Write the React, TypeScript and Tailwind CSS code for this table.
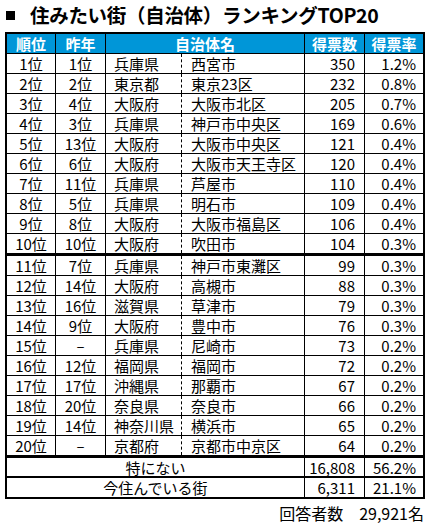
import React from "react";

type Row = [string, string, string, string, string, string];

const rows: Row[] = [
  ["1位", "1位", "兵庫県", "西宮市", "350", "1.2%"],
  ["2位", "2位", "東京都", "東京23区", "232", "0.8%"],
  ["3位", "4位", "大阪府", "大阪市北区", "205", "0.7%"],
  ["4位", "3位", "兵庫県", "神戸市中央区", "169", "0.6%"],
  ["5位", "13位", "大阪府", "大阪市中央区", "121", "0.4%"],
  ["6位", "6位", "大阪府", "大阪市天王寺区", "120", "0.4%"],
  ["7位", "11位", "兵庫県", "芦屋市", "110", "0.4%"],
  ["8位", "5位", "兵庫県", "明石市", "109", "0.4%"],
  ["9位", "8位", "大阪府", "大阪市福島区", "106", "0.4%"],
  ["10位", "10位", "大阪府", "吹田市", "104", "0.3%"],
  ["11位", "7位", "兵庫県", "神戸市東灘区", "99", "0.3%"],
  ["12位", "14位", "大阪府", "高槻市", "88", "0.3%"],
  ["13位", "16位", "滋賀県", "草津市", "79", "0.3%"],
  ["14位", "9位", "大阪府", "豊中市", "76", "0.3%"],
  ["15位", "–", "兵庫県", "尼崎市", "73", "0.2%"],
  ["16位", "12位", "福岡県", "福岡市", "72", "0.2%"],
  ["17位", "17位", "沖縄県", "那覇市", "67", "0.2%"],
  ["18位", "20位", "奈良県", "奈良市", "66", "0.2%"],
  ["19位", "14位", "神奈川県", "横浜市", "65", "0.2%"],
  ["20位", "–", "京都府", "京都市中京区", "64", "0.2%"],
];

const font = { fontFamily: '"Noto Sans CJK JP", "Noto Sans", sans-serif' };

export default function App() {
  return (
    <div className="w-[434px] h-[527px] bg-white text-black" style={font}>
      <div className="flex items-center h-[30px] pl-[6px]">
        <div className="w-[9px] h-[9px] bg-black" />
        <div className="ml-[15px] text-[19.5px] font-bold leading-none tracking-[-0.3px]">
          住みたい街（自治体）ランキングTOP20
        </div>
      </div>
      <div className="ml-[5px] mt-[2px] w-[420px] border-2 border-black text-[15px] leading-none">
        <div className="flex h-[20px] bg-[#0096d8] text-white font-bold border-b border-black">
          <div className="w-[49px] flex items-center justify-center border-r border-black">順位</div>
          <div className="w-[50px] flex items-center justify-center border-r border-black">昨年</div>
          <div className="w-[199px] flex items-center justify-center border-r border-black">自治体名</div>
          <div className="w-[60px] flex items-center justify-center border-r border-black">得票数</div>
          <div className="flex-1 flex items-center justify-center">得票率</div>
        </div>
        {rows.map((r, i) => {
          const thick = i === 9 || i === 19;
          return (
            <div
              key={i}
              className={
                thick
                  ? "flex h-[22px] border-b-[3px] border-black"
                  : "flex h-[20px] border-b border-black"
              }
            >
              <div className="w-[49px] flex items-center justify-center border-r border-black">{r[0]}</div>
              <div className="w-[50px] flex items-center justify-center border-r border-black">{r[1]}</div>
              <div className="w-[76px] flex items-center pl-[8px] border-r border-dashed border-black">{r[2]}</div>
              <div className="w-[123px] flex items-center pl-[9px] border-r border-black">{r[3]}</div>
              <div className="w-[60px] flex items-center justify-end pr-[9px] border-r border-black">{r[4]}</div>
              <div className="flex-1 flex items-center justify-end pr-[7px]">{r[5]}</div>
            </div>
          );
        })}
        <div className="flex h-[20px] border-b-2 border-black">
          <div className="w-[298px] flex items-center justify-center border-r border-black">特にない</div>
          <div className="w-[60px] flex items-center justify-end pr-[9px] border-r border-black">16,808</div>
          <div className="flex-1 flex items-center justify-end pr-[7px]">56.2%</div>
        </div>
        <div className="flex h-[19px]">
          <div className="w-[298px] flex items-center justify-center border-r border-black">今住んでいる街</div>
          <div className="w-[60px] flex items-center justify-end pr-[9px] border-r border-black">6,311</div>
          <div className="flex-1 flex items-center justify-end pr-[7px]">21.1%</div>
        </div>
      </div>
      <div className="w-[424px] mt-[6px] flex justify-end text-[16px] leading-none">
        回答者数　29,921名
      </div>
    </div>
  );
}
